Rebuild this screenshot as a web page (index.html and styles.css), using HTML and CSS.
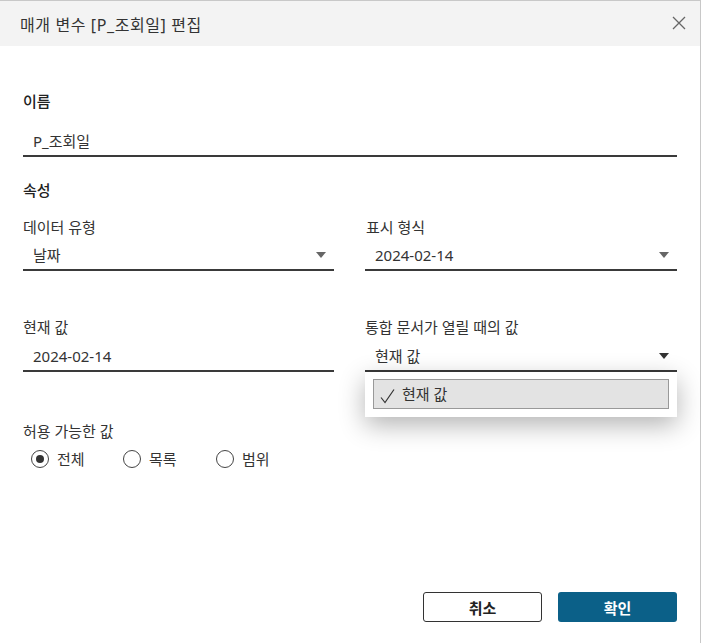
FILE: index.html
```html
<!DOCTYPE html>
<html lang="ko">
<head>
    <meta charset="UTF-8">
    <link rel="stylesheet" href="styles.css">
</head>
<body>
    <div class="dialog">
        <div class="dlgHead">
            <span class="dlgTitle">매개 변수 [P_조회일] 편집</span>
            <svg class="closeBtn" width="14" height="14" viewBox="0 0 14 14"><path d="M1 1L13 13M13 1L1 13" stroke="#666" stroke-width="1.3" fill="none"/></svg>
        </div>
        <div class="dlgBody">
            <div class="secTitle nameTitle">이름</div>
            <div class="field nameField"><span class="val">P_조회일</span></div>

            <div class="secTitle propTitle">속성</div>
            <div class="grid">
                <div class="col">
                    <div class="lbl">데이터 유형</div>
                    <div class="field"><span class="val">날짜</span><span class="arrow"></span></div>
                </div>
                <div class="col">
                    <div class="lbl">표시 형식</div>
                    <div class="field"><span class="val">2024-02-14</span><span class="arrow"></span></div>
                </div>
                <div class="col row2">
                    <div class="lbl">현재 값</div>
                    <div class="field"><span class="val">2024-02-14</span></div>
                </div>
                <div class="col row2">
                    <div class="lbl">통합 문서가 열릴 때의 값</div>
                    <div class="field open">
                        <span class="val">현재 값</span><span class="arrow dark"></span>
                        <div class="popup">
                            <div class="opt">
                                <svg width="16" height="16" viewBox="0 0 16 16"><path d="M1 9.5L5 14.5L14 1.5" stroke="#333" stroke-width="1.2" fill="none"/></svg>
                                <span>현재 값</span>
                            </div>
                        </div>
                    </div>
                </div>
            </div>

            <div class="lbl allowTitle">허용 가능한 값</div>
            <div class="radios">
                <label class="radio on"><span class="circle"></span>전체</label>
                <label class="radio"><span class="circle"></span>목록</label>
                <label class="radio"><span class="circle"></span>범위</label>
            </div>
        </div>
        <div class="dlgFoot">
            <button class="btn cancel">취소</button>
            <button class="btn ok">확인</button>
        </div>
    </div>
</body>
</html>
```

FILE: styles.css
```css
*{box-sizing: border-box;}
body{margin: 0;font-family: "Noto Sans", "Noto Sans CJK KR", sans-serif;font-size: 15px;color: #333;background: #fff;}
.dialog{width: 701px;height: 643px;border-top: 1px solid #c8c8c8;border-right: 1px solid #c8c8c8;display: flex;flex-direction: column;}
.dlgHead{height: 45px;background: #f3f3f3;display: flex;align-items: center;justify-content: space-between;padding: 0 14px 0 20px;}
.dlgTitle{font-size: 16px;letter-spacing: 0.6px;color: #333;}
.closeBtn{display: block;margin-top: -1px;}
.dlgBody{padding: 0 23px;flex: 1;}
.secTitle{height: 20px;line-height: 20px;font-weight: 500;color: #222;}
.nameTitle{margin-top: 45px;}
.propTitle{margin-top: 23px;}
.lbl{height: 20px;line-height: 20px;color: #333;}
.field{position: relative;height: 30px;line-height: 28px;border-bottom: 2px solid #3a3a3a;padding-left: 10px;display: flex;align-items: center;justify-content: space-between;}
.nameField{margin-top: 16px;}
.val{line-height: 28px;}
.arrow{width: 0;height: 0;border-left: 5px solid transparent;border-right: 5px solid transparent;border-top: 6px solid #666;margin-right: 8px;}
.arrow.dark{border-top-color: #333;}
.grid{display: grid;grid-template-columns: 311px 312px;column-gap: 31px;margin-top: 17px;}
.col .lbl{margin-bottom: 4px;}
.grid .col:nth-child(2) .lbl{padding-left: 1px;}
.row2{margin-top: 46px;}
.row2 .lbl{margin-bottom: 5px;}
.popup{position: absolute;top: 2px;left: 0;right: 0;transform: translateY(28px);height: 45px;background: #fff;box-shadow: 0 8px 26px rgba(0,0,0,0.3);padding: 7px 8px 0 8px;}
.opt{height: 30px;background: #e3e3e3;border: 1px solid #999;display: flex;align-items: center;gap: 6px;padding-left: 6px;line-height: 28px;}
.opt svg{display: block;margin-top: 3px;}
.allowTitle{margin-top: 49px;}
.radios{display: flex;margin-top: 8px;padding-left: 8px;height: 20px;align-items: center;}
.radio{display: flex;align-items: center;gap: 8px;width: 92px;line-height: 20px;}
.radio:nth-child(2){width: 93px;}
.circle{width: 18px;height: 18px;border: 1.5px solid #444;border-radius: 50%;display: flex;align-items: center;justify-content: center;}
.radio.on .circle::after{content: "";width: 8px;height: 8px;border-radius: 50%;background: #333;}
.dlgFoot{display: flex;justify-content: flex-end;gap: 16px;padding: 0 23px 21px 0;}
.btn{width: 119px;height: 30px;border-radius: 3px;font-family: inherit;font-size: 15px;font-weight: 700;}
.cancel{background: #fff;border: 1.5px solid #333;color: #222;}
.ok{background: #0b6088;border: none;color: #fff;}
```
